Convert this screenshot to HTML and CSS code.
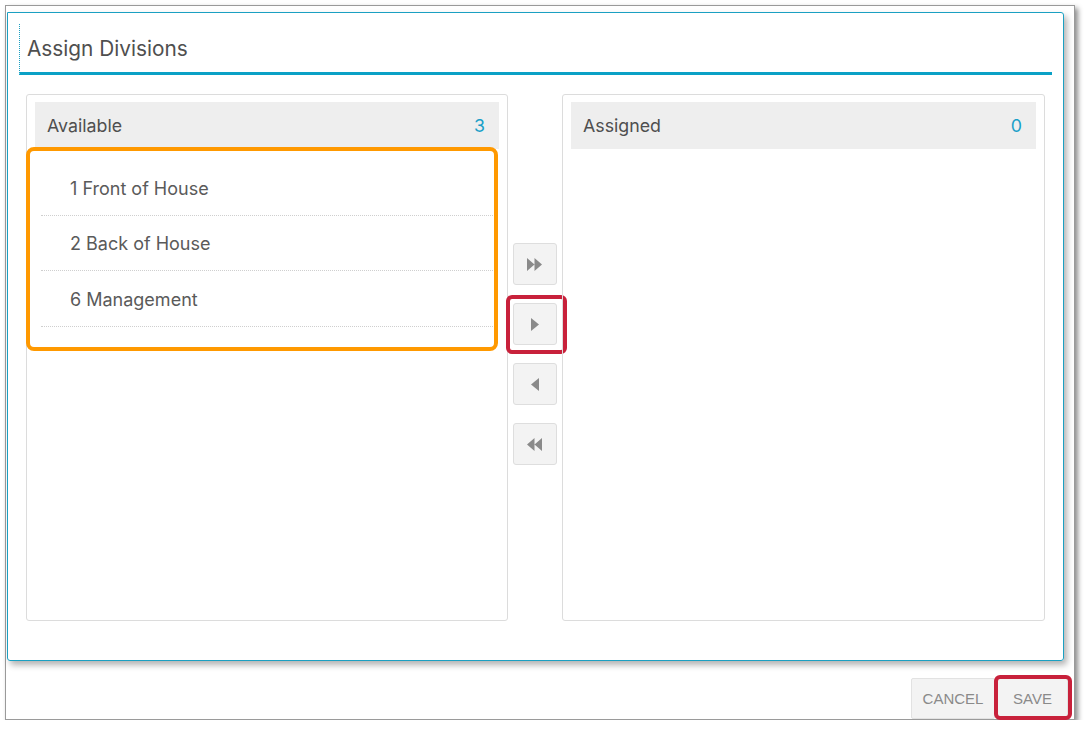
FILE: index.html
```html
<!DOCTYPE html>
<html>
<head>
<meta charset="utf-8">
<link rel="stylesheet" href="styles.css">
</head>
<body>
<div class="window">
  <div class="dialog">
    <div class="title-bar"><h1 class="title">Assign Divisions</h1></div>
    <div class="lists">
      <div class="panel panel-left">
        <div class="panel-head"><span>Available</span><span class="count">3</span></div>
        <ul class="items">
          <li>1 Front of House</li>
          <li>2 Back of House</li>
          <li>6 Management</li>
        </ul>
        <div class="mark-orange"></div>
      </div>
      <div class="mover">
        <button class="mv"><svg width="15" height="13" viewBox="0 0 15 13"><path d="M0 0l7.5 6.5-7.5 6.5z M7.5 0l7.5 6.5-7.5 6.5z" fill="#8a8a8a"/></svg></button>
        <button class="mv mv-hl"><svg width="8" height="13" viewBox="0 0 8 13"><path d="M0 0l8 6.5-8 6.5z" fill="#8a8a8a"/></svg><span class="mark-red"></span></button>
        <button class="mv"><svg width="8" height="13" viewBox="0 0 8 13"><path d="M8 0l-8 6.5 8 6.5z" fill="#8a8a8a"/></svg></button>
        <button class="mv"><svg width="15" height="13" viewBox="0 0 15 13"><path d="M7.5 0l-7.5 6.5 7.5 6.5z M15 0l-7.5 6.5 7.5 6.5z" fill="#8a8a8a"/></svg></button>
      </div>
      <div class="panel">
        <div class="panel-head"><span>Assigned</span><span class="count">0</span></div>
      </div>
    </div>
  </div>
  <div class="footer">
    <button class="fbtn cancel">CANCEL</button>
    <button class="fbtn save">SAVE<span class="mark-red-save"></span></button>
  </div>
</div>
</body>
</html>
```
FILE: styles.css
```css
* { box-sizing: border-box; }
html, body { margin: 0; padding: 0; background: #fff; }
body { font-family: Inter, "Noto Sans", sans-serif; color: #555; }

.window {
  margin: 5px 0 0 5px;
  width: 1070px;
  height: 715px;
  border: 1px solid #9a9a9a;
  background: #fff;
  box-shadow: 3px 3px 5px rgba(0,0,0,0.45);
  display: flex;
  flex-direction: column;
}

.dialog {
  margin: 6px 0 0 1px;
  width: 1057px;
  height: 649px;
  border: 1px solid #1ba0c2;
  border-radius: 0 3px 3px 3px;
  box-shadow: 3px 4px 6px rgba(0,0,0,0.3);
  padding: 11px 11px 0 11px;
}

.title-bar {
  height: 51px;
  border-left: 1px dotted #1ba0c2;
  border-bottom: 3px solid #0aa1c6;
  display: flex;
  align-items: center;
  padding-left: 7px;
}
.title {
  margin: 0;
  font-size: 20.8px;
  font-weight: 400;
  color: #4f4f4f;
}

.lists {
  margin-top: 19px;
  margin-left: 7px;
  display: grid;
  grid-template-columns: 482px 54px 483px;
  height: 527px;
}

.panel {
  border: 1px solid #dcdcdc;
  border-radius: 3px;
  padding: 7px 8px 0 8px;
  position: relative;
}
.panel-head {
  height: 47px;
  background: #eeeeee;
  display: flex;
  justify-content: space-between;
  align-items: center;
  padding: 0 14px 0 12px;
  font-size: 17.8px;
  color: #4f4f4f;
}
.count { color: #1a9fc8; }

.items {
  list-style: none;
  margin: 11px 6px 0 6px;
  padding: 0;
}
.items li {
  height: 55.5px;
  border-bottom: 1px dotted #cfcfcf;
  display: flex;
  align-items: center;
  padding-left: 29px;
  padding-top: 2px;
  font-size: 18px;
  color: #5a5a5a;
}

.mark-orange {
  position: absolute;
  left: -1px;
  top: 52px;
  width: 472px;
  height: 204px;
  border: 4px solid #ff9900;
  border-radius: 8px;
  pointer-events: none;
}

.mover {
  display: flex;
  flex-direction: column;
  align-items: center;
  gap: 18px;
  padding-top: 149px;
  padding-right: 1px;
}
.mv {
  position: relative;
  width: 44px;
  height: 42px;
  background: #f3f3f3;
  border: 1px solid #dedede;
  border-radius: 3px;
  display: flex;
  align-items: center;
  justify-content: center;
  padding: 0;
}
.mark-red {
  position: absolute;
  left: -8px;
  top: -9px;
  width: 61px;
  height: 59px;
  border: 4px solid #c8213b;
  border-radius: 6px;
}

.footer {
  flex: 1;
  display: flex;
  justify-content: flex-end;
  align-items: flex-end;
  padding: 0 6px 0 0;
  gap: 2px;
}
.fbtn {
  height: 41px;
  background: #f3f3f3;
  border: 1px solid #e2e2e2;
  border-radius: 2px;
  font-family: "Liberation Sans", Arial, sans-serif;
  font-size: 15px;
  color: #8a8a8a;
  padding: 0;
  position: relative;
}
.cancel { width: 84px; }
.save { width: 71px; }
.mark-red-save {
  position: absolute;
  left: -4px;
  top: -4px;
  width: 78px;
  height: 45px;
  border: 4px solid #c8213b;
  border-radius: 6px;
}
```
